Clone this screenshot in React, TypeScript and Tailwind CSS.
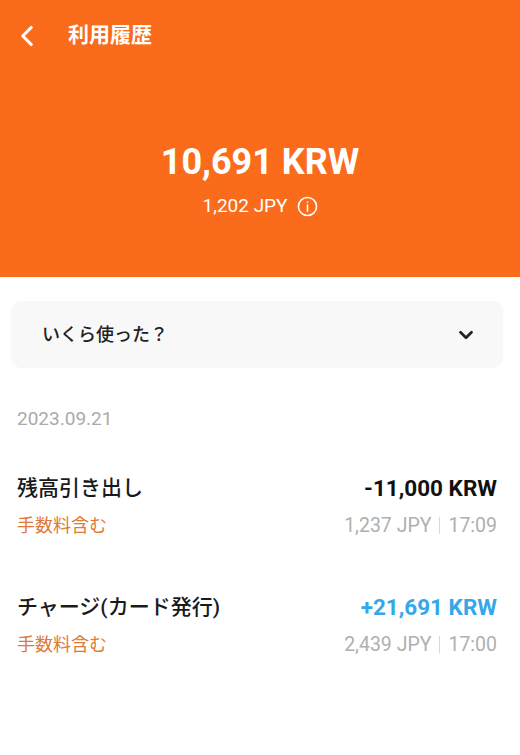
import { ChevronLeft, ChevronDown } from "lucide-react";

const font = { fontFamily: "Roboto, 'Noto Sans CJK JP', sans-serif" };

type Tx = { title: string; amount: string; positive: boolean; jpy: string; time: string };

const txs: Tx[] = [
  { title: "残高引き出し", amount: "-11,000 KRW", positive: false, jpy: "1,237 JPY", time: "17:09" },
  { title: "チャージ(カード発行)", amount: "+21,691 KRW", positive: true, jpy: "2,439 JPY", time: "17:00" },
];

export default function App() {
  return (
    <div className="w-[520px] h-[755px] bg-white" style={font}>
      {/* header */}
      <div className="bg-[#fa6b1b] h-[277px] text-white flex flex-col">
        <div className="flex items-center h-[72px] pl-[10px]">
          <ChevronLeft size={34} strokeWidth={2.2} />
          <span className="ml-[24px] text-[21px] font-bold">利用履歴</span>
        </div>
        <div className="flex flex-col items-center mt-[66px]">
          <div className="text-[36px] font-bold leading-[48px]">10,691 KRW</div>
          <div className="flex items-center gap-[9px] mt-[6px] text-[19px]">
            <span>1,202 JPY</span>
            <svg width="21" height="21" viewBox="0 0 22 22" fill="none" stroke="white" strokeWidth="1.6">
              <circle cx="11" cy="11" r="9.5" />
              <line x1="11" y1="9.5" x2="11" y2="16" strokeLinecap="round" />
              <circle cx="11" cy="6.3" r="0.9" fill="white" stroke="none" />
            </svg>
          </div>
        </div>
      </div>

      {/* dropdown */}
      <div className="px-[11px] pt-[24px] pr-[17px]">
        <div className="h-[67px] bg-[#f8f8f8] rounded-[10px] flex items-center justify-between pl-[31px] pr-[26px]">
          <span className="text-[18px] font-medium text-[#222]">いくら使った？</span>
          <ChevronDown size={22} strokeWidth={3} className="text-[#222]" />
        </div>
      </div>

      <div className="px-[17px] pr-[23px]">
        <div className="mt-[37px] text-[19px] text-[#aaaaaa]">2023.09.21</div>
        <div className="mt-[40px] flex flex-col gap-[52px]">
          {txs.map((t) => (
            <div key={t.title} className="flex flex-col">
              <div className="flex justify-between items-center h-[30px]">
                <span className="text-[21px] font-medium text-[#1a1a1a]">{t.title}</span>
                <span className={`text-[22.5px] font-bold ${t.positive ? "text-[#34a7ea]" : "text-[#111]"}`}>{t.amount}</span>
              </div>
              <div className="flex justify-between items-center h-[30px] mt-[7px]">
                <span className="text-[18px] text-[#e07a38]">手数料含む</span>
                <span className="text-[19.5px] text-[#b0b0b0] flex items-center">
                  {t.jpy}
                  <span className="inline-block w-px h-[17px] bg-[#d8d8d8] mx-[8px]" />
                  {t.time}
                </span>
              </div>
            </div>
          ))}
        </div>
      </div>
    </div>
  );
}
